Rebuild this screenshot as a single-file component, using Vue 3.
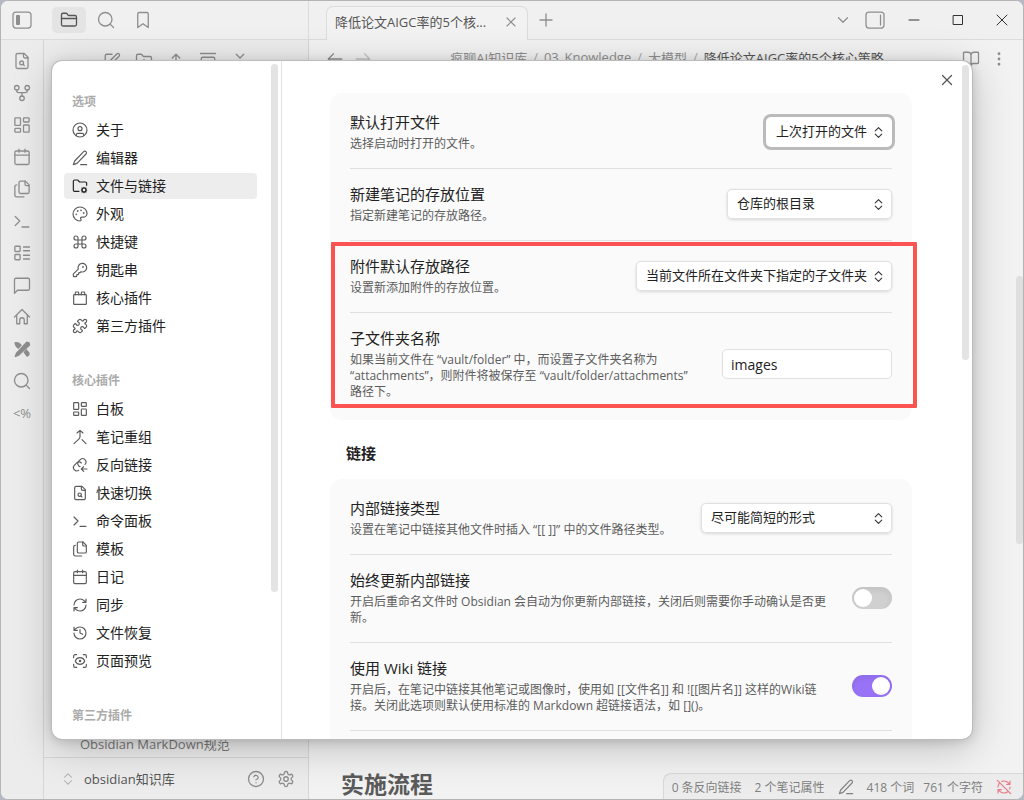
<template>
  <div class="window">
    <!-- 顶部标题栏 -->
    <header class="titlebar">
      <div class="titlebar__left">
        <button class="icon-btn" aria-label="折叠侧栏"><svg class="icon icon--panel" viewBox="0 0 20 20" v-html="icons.panelLeft"></svg></button>
        <button class="icon-btn icon-btn--active" aria-label="文件"><svg class="icon" viewBox="0 0 24 24" v-html="icons.folder"></svg></button>
        <button class="icon-btn" aria-label="搜索"><svg class="icon" viewBox="0 0 24 24" v-html="icons.search"></svg></button>
        <button class="icon-btn" aria-label="书签"><svg class="icon" viewBox="0 0 24 24" v-html="icons.bookmark"></svg></button>
      </div>
      <div class="titlebar__tabs">
        <div class="tab">
          <span class="tab__title">降低论文AIGC率的5个核...</span>
          <button class="bare-btn" aria-label="关闭标签页"><svg class="icon icon--sm" viewBox="0 0 24 24" v-html="icons.close"></svg></button>
        </div>
        <button class="bare-btn tab-add" aria-label="新标签页"><svg class="icon" viewBox="0 0 24 24" v-html="icons.plus"></svg></button>
        <div class="titlebar__right">
          <button class="bare-btn" aria-label="标签列表"><svg class="icon" viewBox="0 0 24 24" v-html="icons.chevronDown"></svg></button>
          <button class="bare-btn" aria-label="右侧栏"><svg class="icon icon--panel" viewBox="0 0 20 20" v-html="icons.panelRight"></svg></button>
        </div>
        <div class="window-controls">
          <button class="bare-btn" aria-label="最小化"><svg class="icon icon--win" viewBox="0 0 12 12" v-html="icons.winMin"></svg></button>
          <button class="bare-btn" aria-label="最大化"><svg class="icon icon--win" viewBox="0 0 12 12" v-html="icons.winMax"></svg></button>
          <button class="bare-btn" aria-label="关闭"><svg class="icon icon--win" viewBox="0 0 12 12" v-html="icons.winClose"></svg></button>
        </div>
      </div>
    </header>

    <div class="workspace">
      <!-- 左侧功能区 -->
      <nav class="ribbon">
        <button v-for="name in ribbon" :key="name" class="bare-btn" :aria-label="name">
          <svg class="icon" viewBox="0 0 24 24" v-html="icons[name]"></svg>
        </button>
        <button class="bare-btn ribbon__text">&lt;%</button>
      </nav>

      <!-- 文件列表 -->
      <aside class="explorer">
        <div class="explorer__tools">
          <button v-for="name in explorerTools" :key="name" class="bare-btn" :aria-label="name">
            <svg class="icon" viewBox="0 0 24 24" v-html="icons[name]"></svg>
          </button>
        </div>
        <div class="explorer__files">
          <a href="#" class="file">Obsidian MarkDown规范</a>
        </div>
        <div class="vault">
          <svg class="icon vault__switch" viewBox="0 0 24 24" v-html="icons.chevronsUpDown"></svg>
          <span class="vault__name">obsidian知识库</span>
          <button class="bare-btn" aria-label="帮助"><svg class="icon" viewBox="0 0 24 24" v-html="icons.help"></svg></button>
          <button class="bare-btn" aria-label="设置"><svg class="icon" viewBox="0 0 24 24" v-html="icons.settings"></svg></button>
        </div>
      </aside>

      <!-- 笔记正文 -->
      <main class="note">
        <div class="note__header">
          <div class="note__nav">
            <svg class="icon" viewBox="0 0 24 24" v-html="icons.arrowLeft"></svg>
            <svg class="icon icon--faint" viewBox="0 0 24 24" v-html="icons.arrowRight"></svg>
          </div>
          <div class="crumbs">
            <span>疯聊AI知识库</span><i>/</i><span>03_Knowledge</span><i>/</i><span>大模型</span><i>/</i><b>降低论文AIGC率的5个核心策略</b>
          </div>
          <div class="note__actions">
            <svg class="icon" viewBox="0 0 24 24" v-html="icons.book"></svg>
            <svg class="icon" viewBox="0 0 24 24" v-html="icons.dots"></svg>
          </div>
        </div>
        <div class="note__scroll"></div>
        <div class="note__bottom">
          <h1 class="note__heading">实施流程</h1>
          <footer class="status">
            <span>0 条反向链接</span>
            <span>2 个笔记属性</span>
            <svg class="icon icon--sm" viewBox="0 0 24 24" v-html="icons.pencil"></svg>
            <span>418 个词</span>
            <span class="status__chars">761 个字符</span>
            <svg class="icon icon--sm icon--error" viewBox="0 0 24 24" v-html="icons.syncOff"></svg>
          </footer>
        </div>
      </main>
    </div>

    <!-- 设置弹窗 -->
    <div class="overlay">
      <section class="modal" role="dialog" aria-label="设置">
        <nav class="menu">
          <div v-for="group in menu" :key="group.title" class="menu__group">
            <h2 class="menu__title">{{ group.title }}</h2>
            <button
              v-for="item in group.items"
              :key="item.label"
              class="menu__item"
              :class="{ 'menu__item--active': item.label === current }"
              @click="current = item.label"
            >
              <svg class="icon icon--sm" viewBox="0 0 24 24" v-html="icons[item.icon]"></svg>
              <span>{{ item.label }}</span>
            </button>
          </div>
          <div class="thumb thumb--menu"></div>
        </nav>

        <div class="settings">
          <button class="bare-btn settings__close" aria-label="关闭设置"><svg class="icon" viewBox="0 0 24 24" v-html="icons.close"></svg></button>
          <div class="thumb thumb--settings"></div>

          <div class="card">
            <div class="row">
              <div class="row__info">
                <label class="row__name" for="open-file">默认打开文件</label>
                <p class="row__desc">选择启动时打开的文件。</p>
              </div>
              <div class="dropdown dropdown--focus">
                <select id="open-file">
                  <option>上次打开的文件</option>
                  <option>新标签页</option>
                </select>
                <svg class="dropdown__arrow" viewBox="0 0 24 24" v-html="icons.chevronsUpDown"></svg>
              </div>
            </div>
            <div class="row">
              <div class="row__info">
                <label class="row__name" for="new-note">新建笔记的存放位置</label>
                <p class="row__desc">指定新建笔记的存放路径。</p>
              </div>
              <div class="dropdown">
                <select id="new-note">
                  <option>仓库的根目录</option>
                  <option>当前文件所在的文件夹</option>
                </select>
                <svg class="dropdown__arrow" viewBox="0 0 24 24" v-html="icons.chevronsUpDown"></svg>
              </div>
            </div>
            <div class="marked">
              <div class="row">
                <div class="row__info">
                  <label class="row__name" for="attach-path">附件默认存放路径</label>
                  <p class="row__desc">设置新添加附件的存放位置。</p>
                </div>
                <div class="dropdown">
                  <select id="attach-path">
                    <option>当前文件所在文件夹下指定的子文件夹</option>
                    <option>仓库的根目录</option>
                  </select>
                  <svg class="dropdown__arrow" viewBox="0 0 24 24" v-html="icons.chevronsUpDown"></svg>
                </div>
              </div>
              <div class="row">
                <div class="row__info">
                  <label class="row__name" for="sub-folder">子文件夹名称</label>
                  <p class="row__desc">如果当前文件在 “vault/folder” 中，而设置子文件夹名称为 “attachments”，则附件将被保存至 “vault/folder/attachments” 路径下。</p>
                </div>
                <input id="sub-folder" v-model="subFolder" class="text-input" type="text">
              </div>
            </div>
          </div>

          <h3 class="section-title">链接</h3>

          <div class="card">
            <div class="row">
              <div class="row__info">
                <label class="row__name" for="link-type">内部链接类型</label>
                <p class="row__desc">设置在笔记中链接其他文件时插入 “[[ ]]” 中的文件路径类型。</p>
              </div>
              <div class="dropdown">
                <select id="link-type">
                  <option>尽可能简短的形式</option>
                  <option>基于仓库根目录的绝对路径</option>
                </select>
                <svg class="dropdown__arrow" viewBox="0 0 24 24" v-html="icons.chevronsUpDown"></svg>
              </div>
            </div>
            <div class="row">
              <div class="row__info">
                <label class="row__name" for="auto-update">始终更新内部链接</label>
                <p class="row__desc">开启后重命名文件时 Obsidian 会自动为你更新内部链接，关闭后则需要你手动确认是否更新。</p>
              </div>
              <input id="auto-update" v-model="autoUpdate" class="toggle" type="checkbox">
            </div>
            <div class="row">
              <div class="row__info">
                <label class="row__name" for="wiki-link">使用 Wiki 链接</label>
                <p class="row__desc">开启后，在笔记中链接其他笔记或图像时，使用如 [[文件名]] 和 ![[图片名]] 这样的Wiki链接。关闭此选项则默认使用标准的 Markdown 超链接语法，如 []()。</p>
              </div>
              <input id="wiki-link" v-model="wikiLink" class="toggle" type="checkbox">
            </div>
            <div class="row row--blank"></div>
          </div>
        </div>
      </section>
    </div>

    <div class="thumb thumb--note"></div>
  </div>
</template>

<script setup>
import { ref } from 'vue'

const current = ref('文件与链接')
const subFolder = ref('images')
const autoUpdate = ref(false)
const wikiLink = ref(true)

const ribbon = ['fileSearch', 'fork', 'dashboard', 'calendar', 'files', 'terminal', 'layoutList', 'message', 'home', 'tools', 'search']
const explorerTools = ['edit', 'folderPlus', 'sort', 'gallery', 'collapse']

const menu = [
  {
    title: '选项',
    items: [
      { label: '关于', icon: 'user' },
      { label: '编辑器', icon: 'pencil' },
      { label: '文件与链接', icon: 'folderCog' },
      { label: '外观', icon: 'palette' },
      { label: '快捷键', icon: 'command' },
      { label: '钥匙串', icon: 'key' },
      { label: '核心插件', icon: 'brick' },
      { label: '第三方插件', icon: 'puzzle' }
    ]
  },
  {
    title: '核心插件',
    items: [
      { label: '白板', icon: 'dashboard' },
      { label: '笔记重组', icon: 'merge' },
      { label: '反向链接', icon: 'backlink' },
      { label: '快速切换', icon: 'fileSearch' },
      { label: '命令面板', icon: 'terminal' },
      { label: '模板', icon: 'files' },
      { label: '日记', icon: 'calendar' },
      { label: '同步', icon: 'sync' },
      { label: '文件恢复', icon: 'history' },
      { label: '页面预览', icon: 'scanEye' }
    ]
  },
  {
    title: '第三方插件',
    items: []
  }
]

const icons = {
  panelLeft: '<rect x="1" y="2" width="18" height="16" rx="3"/><rect x="4" y="5" width="4" height="10" rx="1" fill="currentColor" stroke="none"/>',
  panelRight: '<rect x="1" y="2" width="18" height="16" rx="3"/><path d="M15.500 5v10"/>',
  folder: '<path d="M20 20a2 2 0 0 0 2-2V8a2 2 0 0 0-2-2h-7.900a2 2 0 0 1-1.690-.9L9.600 3.900A2 2 0 0 0 7.930 3H4a2 2 0 0 0-2 2v13a2 2 0 0 0 2 2Z"/><path d="M2 10h20"/>',
  search: '<circle cx="11" cy="11" r="9"/><path d="m22 22-4.500-4.500"/>',
  bookmark: '<path d="m19 22-7-5-7 5V4a2 2 0 0 1 2-2h10a2 2 0 0 1 2 2v18z"/>',
  close: '<path d="M18 6 6 18M6 6l12 12"/>',
  plus: '<path d="M4 12h16M12 4v16"/>',
  chevronDown: '<path d="m6 9 6 6 6-6"/>',
  winMin: '<path d="M1 6h10"/>',
  winMax: '<path d="M1.500 1.500h9v9h-9z"/>',
  winClose: '<path d="m1 1 10 10M11 1 1 11"/>',
  fileSearch: '<path d="M14 2v4a2 2 0 0 0 2 2h4"/><path d="M15 2H6a2 2 0 0 0-2 2v16a2 2 0 0 0 2 2h12a2 2 0 0 0 2-2V7z"/><circle cx="11.500" cy="14.500" r="2.500"/><path d="M13.300 16.300 15 18"/>',
  fork: '<circle cx="12" cy="19" r="3"/><circle cx="5" cy="5" r="3"/><circle cx="19" cy="5" r="3"/><path d="M19 8v1a2.500 2.500 0 0 1-2.500 2.500h-9A2.500 2.500 0 0 1 5 9V8M12 11.500V16"/>',
  dashboard: '<rect x="2.500" y="2.500" width="7.500" height="10" rx="1"/><rect x="14" y="2.500" width="7.500" height="5.500" rx="1"/><rect x="14" y="12" width="7.500" height="9.500" rx="1"/><rect x="2.500" y="16.500" width="7.500" height="5" rx="1"/>',
  calendar: '<path d="M8 1.500v4M16 1.500v4M2.500 9.500h19"/><rect x="2.500" y="4" width="19" height="18" rx="2"/>',
  files: '<path d="M21.500 7.500H18a2 2 0 0 1-2-2V1.500"/><path d="M10 18a2 2 0 0 1-2-2V3.500a2 2 0 0 1 2-2h6.500l5 5V16a2 2 0 0 1-2 2Z"/><path d="M5 6.500a2.500 2.500 0 0 0-2.500 2.500v11A2.500 2.500 0 0 0 5 22.500h9.500"/>',
  terminal: '<path d="m3 18 6-6-6-6M12 20h9"/>',
  layoutList: '<rect x="2.500" y="3" width="7" height="7" rx="1"/><rect x="2.500" y="14" width="7" height="7" rx="1"/><path d="M14 4h8M14 9h8M14 15h8M14 20h8"/>',
  message: '<path d="M22 17a2 2 0 0 1-2 2H6l-4 4V5a2 2 0 0 1 2-2h16a2 2 0 0 1 2 2z"/>',
  home: '<path d="M2 12 12 2l10 10M5 10v11h4v-5a3 3 0 0 1 6 0v5h4V10"/>',
  tools: '<g fill="currentColor" stroke="none"><path d="M2 3c4-1 7 0 9 3l2 3-4 4-3-2C3 9 2 6 2 3Z"/><path d="m13 15 4-4 5 6c1 3-2 6-4 5z"/></g><path d="M20 4 6 19" stroke="#ececec" stroke-width="8" stroke-linecap="butt"/><path d="m18 2 4 1 1 4L8 21l-5 2-1-1 2-5z" fill="currentColor" stroke="none"/>',
  edit: '<path d="M12 3H5a2 2 0 0 0-2 2v14a2 2 0 0 0 2 2h14a2 2 0 0 0 2-2v-7"/><path d="M18.400 2.600a2.100 2.100 0 0 1 3 3L12.400 14.600l-4 1 1-4Z"/>',
  folderPlus: '<path d="M12 10v6M9 13h6M20 20a2 2 0 0 0 2-2V8a2 2 0 0 0-2-2h-7.900a2 2 0 0 1-1.690-.9L9.600 3.900A2 2 0 0 0 7.930 3H4a2 2 0 0 0-2 2v13a2 2 0 0 0 2 2Z"/>',
  sort: '<path d="m7 8 5-5 5 5M12 3v18"/>',
  gallery: '<path d="M2 2h20"/><rect x="3" y="7" width="18" height="14" rx="2"/>',
  collapse: '<path d="m7 3 5 5 5-5M7 21l5-5 5 5"/>',
  chevronsUpDown: '<path d="m6 15 6 6 6-6M6 9l6-6 6 6"/>',
  help: '<circle cx="12" cy="12" r="10"/><path d="M9.090 9a3 3 0 0 1 5.830 1c0 2-3 3-3 3M12 17h.01"/>',
  settings: '<path d="M12.220 2h-.44a2 2 0 0 0-2 2v.18a2 2 0 0 1-1 1.730l-.43.25a2 2 0 0 1-2 0l-.15-.08a2 2 0 0 0-2.730.73l-.22.38a2 2 0 0 0 .73 2.730l.15.1a2 2 0 0 1 1 1.720v.51a2 2 0 0 1-1 1.740l-.15.09a2 2 0 0 0-.73 2.730l.22.38a2 2 0 0 0 2.730.73l.15-.08a2 2 0 0 1 2 0l.43.25a2 2 0 0 1 1 1.730V20a2 2 0 0 0 2 2h.44a2 2 0 0 0 2-2v-.18a2 2 0 0 1 1-1.730l.43-.25a2 2 0 0 1 2 0l.15.08a2 2 0 0 0 2.730-.73l.22-.39a2 2 0 0 0-.73-2.730l-.15-.08a2 2 0 0 1-1-1.740v-.5a2 2 0 0 1 1-1.740l.15-.09a2 2 0 0 0 .73-2.730l-.22-.38a2 2 0 0 0-2.730-.73l-.15.08a2 2 0 0 1-2 0l-.43-.25a2 2 0 0 1-1-1.730V4a2 2 0 0 0-2-2z"/><circle cx="12" cy="12" r="3"/>',
  arrowLeft: '<path d="m10 5-7 7 7 7M3 12h18"/>',
  arrowRight: '<path d="m14 5 7 7-7 7M3 12h18"/>',
  book: '<path d="M12 7v14M3 18a1 1 0 0 1-1-1V4a1 1 0 0 1 1-1h5a4 4 0 0 1 4 4 4 4 0 0 1 4-4h5a1 1 0 0 1 1 1v13a1 1 0 0 1-1 1h-6a3 3 0 0 0-3 3 3 3 0 0 0-3-3z"/>',
  dots: '<circle cx="12" cy="12" r="1"/><circle cx="12" cy="5" r="1"/><circle cx="12" cy="19" r="1"/>',
  pencil: '<path d="M13 22h9M17.500 2.500a2.400 2.400 0 0 1 3.500 3.500L7.500 20l-5.500 2 2-5.500z"/>',
  syncOff: '<path d="M21 8 18.740 5.740A9.750 9.750 0 0 0 12 3c-1.100 0-2.160.180-3.150.510M8 16H3v5M3 12c0-2.490 1-4.740 2.640-6.360M3 16l2.260 2.260A9.750 9.750 0 0 0 12 21c2.490 0 4.740-1 6.360-2.640M21 12c0 1-.16 1.970-.47 2.870M21 3v5h-5M22 22 2 2"/>',
  user: '<circle cx="12" cy="12" r="10.500"/><circle cx="12" cy="10" r="3"/><path d="M6.500 20.500V19a2 2 0 0 1 2-2h7a2 2 0 0 1 2 2v1.500"/>',
  folderCog: '<path d="M10.500 20H4a2 2 0 0 1-2-2V5a2 2 0 0 1 2-2h3.900a2 2 0 0 1 1.690.9l.81 1.200a2 2 0 0 0 1.670.9H20a2 2 0 0 1 2 2v3"/><circle cx="18" cy="18" r="3"/><path d="M18 14v1M18 21v1M22 18h-1M15 18h-1M21 15l-.88.880M15.880 20.120 15 21M21 21l-.88-.88M15.880 15.880 15 15"/>',
  palette: '<circle cx="13.500" cy="6.500" r=".5"/><circle cx="17.500" cy="10.500" r=".5"/><circle cx="8.500" cy="7.500" r=".5"/><circle cx="6.500" cy="12.500" r=".5"/><path d="M12 1.500C6.200 1.500 1.500 6.200 1.500 12S6.200 22.500 12 22.500c1 0 1.700-.8 1.700-1.800 0-.44-.18-.84-.44-1.130-.29-.29-.44-.65-.44-1.130a1.640 1.640 0 0 1 1.670-1.670h2.300c3.050 0 5.700-2.500 5.700-5.560C22.500 5.800 17.700 1.500 12 1.500z"/>',
  command: '<path d="M15 6v12a3 3 0 1 0 3-3H6a3 3 0 1 0 3 3V6a3 3 0 1 0-3 3h12a3 3 0 1 0-3-3"/>',
  key: '<path d="M2.590 17.410A2 2 0 0 0 2 18.830V21a1 1 0 0 0 1 1h3a1 1 0 0 0 1-1v-1a1 1 0 0 1 1-1h1a1 1 0 0 0 1-1v-1a1 1 0 0 1 1-1h.17a2 2 0 0 0 1.420-.59l.81-.81a6.500 6.500 0 1 0-4-4z"/><circle cx="16.500" cy="7.500" r=".5"/>',
  brick: '<rect x="2.500" y="7" width="19" height="14.500" rx="1"/><path d="M10 7V4a1 1 0 0 0-1-1H6a1 1 0 0 0-1 1v3M19 7V4a1 1 0 0 0-1-1h-3a1 1 0 0 0-1 1v3"/>',
  puzzle: '<path d="M15.390 4.390a1 1 0 0 0 1.680-.474 2.500 2.500 0 1 1 3.014 3.015 1 1 0 0 0-.474 1.680l1.683 1.682a2.414 2.414 0 0 1 0 3.414L19.610 15.390a1 1 0 0 1-1.680-.474 2.500 2.500 0 1 0-3.014 3.015 1 1 0 0 1 .474 1.680l-1.683 1.682a2.414 2.414 0 0 1-3.414 0L8.610 19.610a1 1 0 0 0-1.680.474 2.500 2.500 0 1 1-3.014-3.015 1 1 0 0 0 .474-1.680l-1.683-1.682a2.414 2.414 0 0 1 0-3.414L4.390 8.610a1 1 0 0 1 1.680.474 2.500 2.500 0 1 0 3.014-3.015 1 1 0 0 1-.474-1.680l1.683-1.682a2.414 2.414 0 0 1 3.414 0z"/>',
  merge: '<path d="m7.500 6 4.500-4 4.500 4M12 2v9.300a5 5 0 0 1-1.400 3.500L3 22M21 22l-6-6"/>',
  backlink: '<path d="M19.500 11a5 5 0 0 0-7.070-7.070l-2.700 2.700A5 5 0 0 0 12 14.500"/><path d="M14 9a5 5 0 0 0-6.540-.54l-4 4a5 5 0 0 0 6.500 7.500"/><path d="M22.500 18H14M17.500 14.500 14 18l3.500 3.500"/>',
  sync: '<path d="M3 12a9 9 0 0 1 9-9 9.750 9.750 0 0 1 6.740 2.740L21 8M21 3v5h-5M21 12a9 9 0 0 1-9 9 9.750 9.750 0 0 1-6.740-2.740L3 16M8 16H3v5"/>',
  history: '<path d="M3 12a9 9 0 1 0 9-9 9.750 9.750 0 0 0-6.740 2.740L3 8M3 3v5h5M12 7v5l4 2"/>',
  scanEye: '<path d="M2.500 7V4.500a2 2 0 0 1 2-2H7M17 2.500h2.500a2 2 0 0 1 2 2V7M21.500 17v2.500a2 2 0 0 1-2 2H17M7 21.500H4.500a2 2 0 0 1-2-2V17"/><circle cx="12" cy="12" r="1"/><path d="M18.940 12.330a1 1 0 0 0 0-.66 7.500 7.500 0 0 0-13.880 0 1 1 0 0 0 0 .66 7.500 7.500 0 0 0 13.880 0"/>'
}
</script>

<style>
body {
  margin: 0;
  background: #b4b9c4;
}
</style>

<style scoped>
.window {
  position: relative;
  display: flex;
  flex-direction: column;
  height: 100vh;
  box-sizing: border-box;
  border: 1px solid #b4b4b4;
  border-radius: 8px;
  overflow: hidden;
  background: #f2f2f2;
  color: #222;
  font-family: "Open Sans", "Noto Sans CJK SC", sans-serif;
  font-size: 13px;
}

button,
input,
select {
  font-family: inherit;
  color: inherit;
}

.icon {
  display: block;
  flex: none;
  width: 18px;
  height: 18px;
  fill: none;
  stroke: currentColor;
  stroke-width: 1.75;
  stroke-linecap: round;
  stroke-linejoin: round;
}

.icon--sm {
  width: 16px;
  height: 16px;
}

.icon--panel {
  width: 20px;
  height: 20px;
  stroke-width: 1.25;
}

.icon--win {
  width: 12px;
  height: 12px;
  stroke-width: 1;
  color: #333;
}

.icon--faint {
  color: #c4c4c4;
}

.icon--error {
  color: #e87a88;
}

.bare-btn,
.icon-btn {
  display: flex;
  align-items: center;
  justify-content: center;
  padding: 0;
  border: 0;
  background: none;
  color: #8e8e8e;
}

/* ========== 标题栏 ========== */
.titlebar {
  display: flex;
  flex: none;
  height: 39px;
  box-sizing: border-box;
  background: #f0f0f0;
  border-bottom: 1px solid #dcdcdc;
}

.titlebar__left {
  display: flex;
  flex: none;
  align-items: center;
  gap: 3px;
  width: 308px;
  box-sizing: border-box;
  padding-left: 4px;
  border-right: 1px solid #dcdcdc;
}

.icon-btn {
  width: 34px;
  height: 26px;
  border-radius: 5px;
}

.icon-btn:first-child {
  margin-right: 10px;
}

.icon-btn--active {
  background: #e4e4e4;
  color: #555;
}

.titlebar__tabs {
  display: flex;
  flex: 1;
  align-items: center;
  padding-left: 17px;
}

.tab {
  position: relative;
  display: flex;
  align-items: center;
  justify-content: space-between;
  align-self: flex-end;
  width: 202px;
  height: 34px;
  margin-bottom: -1px;
  box-sizing: border-box;
  padding: 0 8px 4px;
  border: 1px solid #dcdcdc;
  border-bottom: 0;
  border-radius: 7px 7px 0 0;
  background: #f2f2f2;
}

.tab__title {
  color: #555;
  white-space: nowrap;
}

.tab-add {
  margin-left: 9px;
}

.titlebar__right {
  display: flex;
  gap: 13px;
  margin-left: auto;
}

.window-controls {
  display: flex;
  align-items: center;
  gap: 32px;
  padding: 0 15px 0 23px;
}

/* ========== 工作区 ========== */
.workspace {
  display: flex;
  flex: 1;
  min-height: 0;
}

.ribbon {
  display: flex;
  flex: none;
  flex-direction: column;
  align-items: center;
  gap: 14px;
  width: 43px;
  box-sizing: border-box;
  padding-top: 12px;
  border-right: 1px solid #d6d6d6;
  background: #ececec;
}

.ribbon__text {
  height: 18px;
  font-size: 13px;
}

.explorer {
  display: flex;
  flex: none;
  flex-direction: column;
  width: 265px;
  box-sizing: border-box;
  border-right: 1px solid #d6d6d6;
  background: #ececec;
}

.explorer__tools {
  display: flex;
  justify-content: center;
  gap: 14px;
  padding-top: 12px;
}

.explorer__files {
  display: flex;
  flex: 1;
  align-items: flex-end;
  padding: 0 36px 3px;
}

.file {
  color: #777;
  line-height: 20px;
  text-decoration: none;
  white-space: nowrap;
}

.vault {
  display: flex;
  align-items: center;
  gap: 12px;
  height: 42px;
  box-sizing: border-box;
  padding: 0 13px 0 17px;
  border-top: 1px solid #d6d6d6;
}

.vault__switch {
  width: 14px;
  height: 14px;
  color: #aaa;
}

.vault__name {
  flex: 1;
  margin-left: -3px;
  color: #555;
}

/* ========== 笔记 ========== */
.note {
  display: flex;
  flex: 1;
  flex-direction: column;
  min-width: 0;
}

.note__header {
  display: flex;
  align-items: center;
  justify-content: space-between;
  height: 38px;
  padding: 0 15px 0 17px;
  color: #8e8e8e;
}

.note__nav,
.note__actions {
  display: flex;
  gap: 10px;
}

.crumbs {
  display: flex;
  gap: 6px;
  padding-bottom: 4px;
  white-space: nowrap;
}

.crumbs i {
  font-style: normal;
  color: #aaa;
}

.crumbs b {
  font-weight: 400;
  color: #555;
}

.note__scroll {
  flex: 1;
}

.note__bottom {
  display: flex;
  align-items: flex-end;
  justify-content: space-between;
}

.note__heading {
  margin: 0;
  padding-left: 32px;
  color: #5a5a5a;
  font-size: 23px;
  line-height: 30px;
}

.status {
  display: flex;
  align-items: center;
  gap: 13px;
  height: 26px;
  box-sizing: border-box;
  padding: 0 11px 0 8px;
  border: 1px solid #d8d8d8;
  border-width: 1px 0 0 1px;
  border-radius: 8px 0 0 0;
  background: #ececec;
  color: #808080;
  font-size: 12px;
}

.status__chars {
  margin-left: -4px;
}

/* ========== 弹窗 ========== */
.overlay {
  position: absolute;
  inset: 0;
  display: flex;
  align-items: center;
  justify-content: center;
}

.modal {
  display: flex;
  width: calc(100% - 102px);
  height: calc(100% - 120px);
  border-radius: 10px;
  overflow: hidden;
  background: #fff;
  box-shadow: 0 0 0 1px #bcbcbc, 0 2px 12px rgba(0, 0, 0, 0.16), 0 8px 40px rgba(0, 0, 0, 0.22);
}

.menu {
  position: relative;
  display: flex;
  flex: none;
  flex-direction: column;
  gap: 34px;
  width: 230px;
  box-sizing: border-box;
  padding: 33px 24px 0 12px;
  border-right: 1px solid #e0e0e0;
}

.menu__group {
  display: flex;
  flex: none;
  flex-direction: column;
  gap: 2px;
}

.menu__title {
  margin: 0 0 5px;
  padding-left: 8px;
  color: #ababab;
  font-size: 12px;
  font-weight: 600;
  line-height: 16px;
}

.menu__item {
  display: flex;
  align-items: center;
  gap: 8px;
  height: 26px;
  padding: 0 8px;
  border: 0;
  border-radius: 4px;
  background: none;
  font-size: 14px;
  line-height: 20px;
  text-align: left;
}

.menu__item .icon {
  color: #5c5c5c;
}

.menu__item--active {
  background: #ededed;
}

.menu__item--active .icon {
  color: #222;
}

.thumb {
  position: absolute;
  width: 7px;
  border-radius: 4px;
  background: #e3e3e3;
}

.thumb--menu {
  top: 3px;
  right: 3px;
  height: 528px;
}

.thumb--settings {
  top: 4px;
  right: 3px;
  height: 295px;
}

.thumb--note {
  top: 275px;
  right: 0;
  height: 268px;
  background: #dfdfdf;
}

/* ========== 设置内容 ========== */
.settings {
  position: relative;
  flex: 1;
  min-width: 0;
  padding: 32px 60px 0 48px;
}

.settings__close {
  position: absolute;
  top: 10px;
  right: 16px;
  color: #555;
}

.card {
  padding: 4px 20px;
  border-radius: 12px;
  background: #fafafa;
}

.row {
  display: flex;
  align-items: center;
  gap: 20px;
  padding: 15px 0 16px;
  border-bottom: 1px solid #e0e0e0;
}

.marked .row:last-child,
.row--blank {
  border-bottom: 0;
}

.row__info {
  flex: 1;
  min-width: 0;
}

.row__name {
  display: block;
  font-size: 15px;
  line-height: 20px;
}

.row__desc {
  margin: 4px 0 0;
  color: #5c5c5c;
  font-size: 12px;
  line-height: 16px;
}

/* 红色标注框，覆盖附件相关的两项 */
.marked {
  position: relative;
}

.marked::after {
  content: "";
  position: absolute;
  inset: 1px -25px 8px -19px;
  border: 4px solid #fb5252;
  border-radius: 1px;
  pointer-events: none;
}

.dropdown {
  display: grid;
  flex: none;
  align-items: center;
}

.dropdown select {
  grid-area: 1 / 1;
  height: 30px;
  padding: 0 24px 2px 10px;
  appearance: none;
  border: 0;
  border-radius: 5px;
  background: #fff;
  box-shadow: inset 0 0 0 1px #e0e0e0, 0 1px 3px rgba(0, 0, 0, 0.14);
  font-size: 13px;
}

.dropdown--focus select {
  box-shadow: 0 0 0 3px #bababa;
}

.dropdown__arrow {
  grid-area: 1 / 1;
  justify-self: end;
  width: 13px;
  height: 13px;
  margin-right: 7px;
  fill: none;
  stroke: #333;
  stroke-width: 2;
  stroke-linecap: round;
  stroke-linejoin: round;
  pointer-events: none;
}

.text-input {
  flex: none;
  width: 170px;
  height: 30px;
  box-sizing: border-box;
  padding: 0 8px;
  border: 1px solid #e0e0e0;
  border-radius: 5px;
  background: #fff;
  font-size: 14px;
}

.toggle {
  flex: none;
  width: 40px;
  height: 22px;
  margin: 0;
  padding: 2px;
  box-sizing: border-box;
  appearance: none;
  border-radius: 11px;
  background: #d0d0d0;
  box-shadow: inset 0 3px 6px rgba(0, 0, 0, 0.07);
}

.toggle::before {
  content: "";
  display: block;
  width: 18px;
  height: 18px;
  border-radius: 50%;
  background: #fff;
}

.toggle:checked {
  background: #9873f7;
}

.toggle:checked::before {
  margin-left: auto;
}

.section-title {
  margin: 23px 0 16px;
  padding-left: 16px;
  font-size: 15px;
  line-height: 20px;
}
</style>
